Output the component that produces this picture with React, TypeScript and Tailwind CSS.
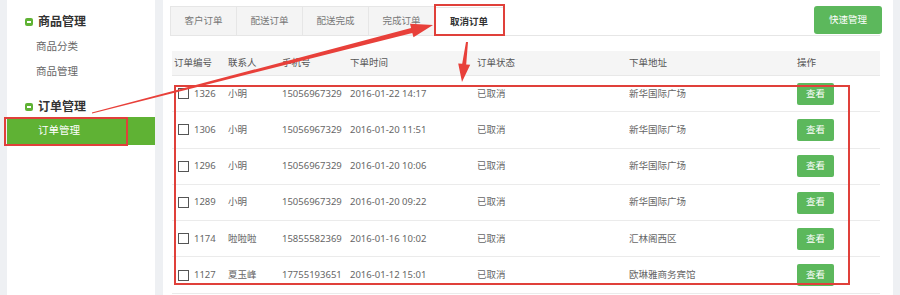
import React from 'react';

const tabs = ['客户订单', '配送订单', '配送完成', '完成订单', '取消订单'];

const orders = [
  { id: '1326', name: '小明', phone: '15056967329', time: '2016-01-22 14:17', addr: '新华国际广场' },
  { id: '1306', name: '小明', phone: '15056967329', time: '2016-01-20 11:51', addr: '新华国际广场' },
  { id: '1296', name: '小明', phone: '15056967329', time: '2016-01-20 10:06', addr: '新华国际广场' },
  { id: '1289', name: '小明', phone: '15056967329', time: '2016-01-20 09:22', addr: '新华国际广场' },
  { id: '1174', name: '啦啦啦', phone: '15855582369', time: '2016-01-16 10:02', addr: '汇林阁西区' },
  { id: '1127', name: '夏玉峰', phone: '17755193651', time: '2016-01-12 15:01', addr: '欧琳雅商务宾馆' },
];

const cols = 'grid grid-cols-[54px_54px_68px_127px_152px_168px_1fr] pl-[2px]';

// small green "minus" square in front of the menu group titles
const GroupIcon = () => (
  <span className="w-[8px] h-[8px] rounded-[2px] bg-[#5fb234] flex items-center justify-center mr-[5px]">
    <span className="w-[4px] h-[1.5px] bg-white" />
  </span>
);

const Sidebar = () => (
  <div className="w-[148px] h-full bg-white flex flex-col text-[10.5px]">
    <div className="mt-[14px] h-[16px] flex items-center pl-[18px] text-[12px] font-bold text-[#333]">
      <GroupIcon />
      商品管理
    </div>
    <div className="mt-[9px] h-[16px] flex items-center pl-[29px] text-[#666]">商品分类</div>
    <div className="mt-[9px] h-[16px] flex items-center pl-[29px] text-[#666]">商品管理</div>
    <div className="mt-[19px] h-[16px] flex items-center pl-[18px] text-[12px] font-bold text-[#333]">
      <GroupIcon />
      订单管理
    </div>
    <div className="mt-[2px] h-[28px] flex items-center pl-[31px] bg-[#5fb234] text-white">订单管理</div>
  </div>
);

const Content = () => (
  <div className="w-[730px] h-full bg-white pl-[7px] pr-[13px] pt-[7px] text-[9.5px] text-[#666]">
    {/* tabs */}
    <div className="flex items-end border-b border-[#e6e6e6] h-[29px]">
      {tabs.map((t, i) =>
        i === tabs.length - 1 ? (
          <div
            key={t}
            className="w-[70px] h-[29px] -mb-px bg-white border-x border-t border-[#e6e6e6] flex items-center justify-center font-bold text-[#333]"
          >
            {t}
          </div>
        ) : (
          <div
            key={t}
            className="w-[66px] h-[29px] bg-[#f4f4f4] border-l border-t border-[#e6e6e6] flex items-center justify-center text-[#777]"
          >
            {t}
          </div>
        )
      )}
      <div className="flex-1" />
      <button className="mb-[1px] w-[68px] h-[28px] rounded-[3px] bg-[#5cb85c] text-white mr-[-2px]">
        快速管理
      </button>
    </div>

    {/* table */}
    <div className="mt-[15px] ml-[2px]">
      <div className={`${cols} h-[25px] items-center bg-[#f5f5f5] border-b border-[#e8e8e8] text-[#555]`}>
        <span>订单编号</span>
        <span>联系人</span>
        <span>手机号</span>
        <span>下单时间</span>
        <span>订单状态</span>
        <span>下单地址</span>
        <span>操作</span>
      </div>
      {orders.map(o => (
        <div key={o.id} className={`${cols} h-[36.3px] items-center border-b border-[#ebebeb]`}>
          <span className="flex items-center">
            <span className="ml-[4px] mr-[5px] w-[11px] h-[11px] border border-[#555] bg-white" />
            {o.id}
          </span>
          <span>{o.name}</span>
          <span>{o.phone}</span>
          <span>{o.time}</span>
          <span>已取消</span>
          <span>{o.addr}</span>
          <span>
            <button className="w-[37px] h-[22px] rounded-[2px] bg-[#5cb85c] text-white">查看</button>
          </span>
        </div>
      ))}
    </div>
  </div>
);

export default function App() {
  return (
    <div
      className="relative w-[900px] h-[295px] overflow-hidden bg-[#eef0f3] flex gap-[8px] pl-[7px]"
      style={{ fontFamily: '"Noto Sans", "Noto Sans CJK SC", sans-serif' }}
    >
      <Sidebar />
      <Content />

      {/* red annotation boxes */}
      <div className="absolute left-[4px] top-[117px] w-[124px] h-[29px] border-2 border-[#e0403a]" />
      <div className="absolute left-[434px] top-[4px] w-[71px] h-[32px] border-2 border-[#e0403a]" />
      <div className="absolute left-[174px] top-[85px] w-[676px] h-[200px] border-2 border-[#e0403a]" />

      {/* red arrows */}
      <svg className="absolute inset-0 pointer-events-none" width="900" height="295">
        <polygon
          fill="#e8403a"
          points="91.9,112.5 411.1,28.1 410,23.7 433,25 413.5,37.3 412.3,32.9 92.1,113.5"
        />
        <polygon
          fill="#e8403a"
          points="466,41.9 462.2,63.8 458.2,63.4 462,82 470.2,64.8 466.2,64.4 468,42.1"
        />
      </svg>
    </div>
  );
}
